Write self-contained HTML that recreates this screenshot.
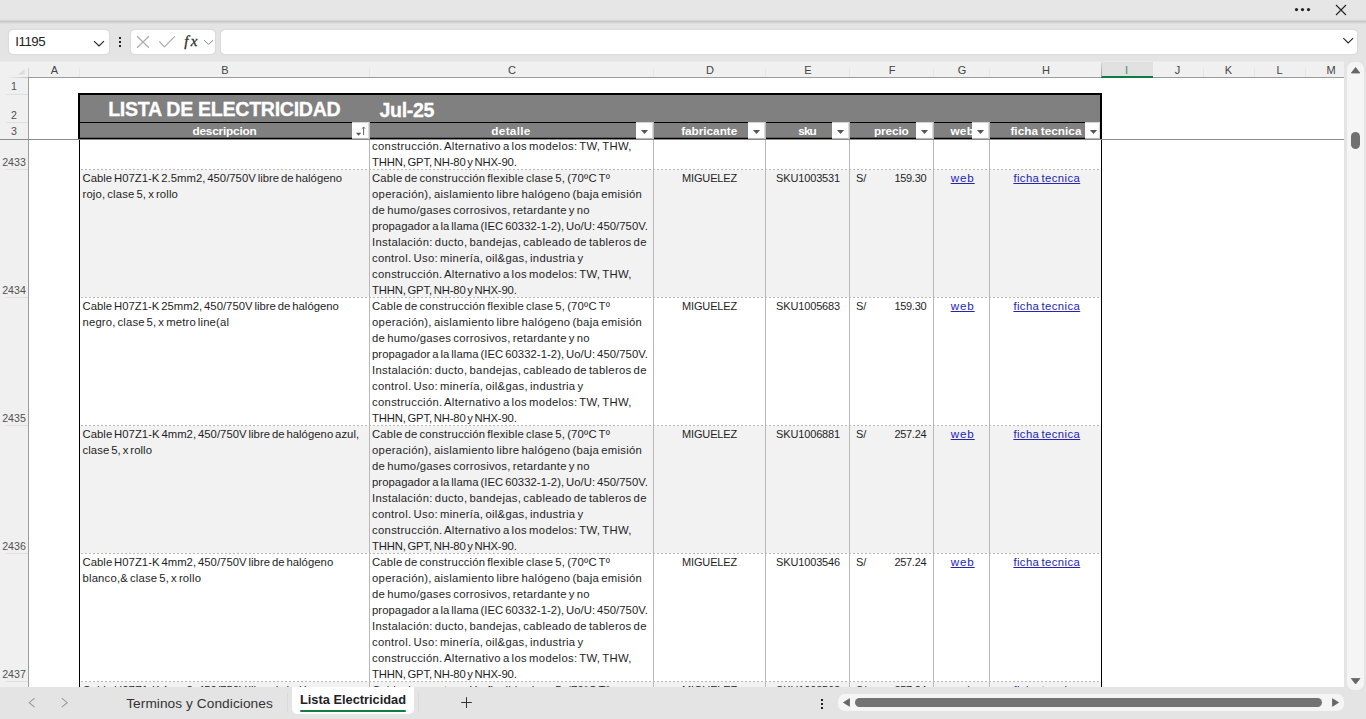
<!DOCTYPE html>
<html lang="es"><head><meta charset="utf-8"><title>Lista Electricidad</title>
<style>
html,body{margin:0;padding:0}
body{width:1366px;height:719px;overflow:hidden;background:#e4e4e4;position:relative;font-family:"Liberation Sans",sans-serif;color:#222}
.a{position:absolute}
.t{position:absolute;white-space:pre;line-height:16px;font-size:11px;color:#1e1e1e}
.b{font-size:11.3px}
.w{word-spacing:-1.3px}
.box{position:absolute;background:#fff;border-radius:4px;top:30px;height:24px;box-shadow:0 0 1.5px rgba(0,0,0,.22)}
.ch{position:absolute;top:62px;height:15px;line-height:16px;font-size:11px;color:#444;text-align:center}
.rh{position:absolute;left:0;width:28px;text-align:center;font-size:10.6px;line-height:14px;color:#505050}
.hd{position:absolute;top:123.6px;height:15px;line-height:15px;font-size:11.6px;font-weight:bold;color:#fff;text-align:center}
.fb{position:absolute;top:122px;width:16px;height:16px;background:#fdfdfd;border-top:1px solid #d4d4d4;border-right:1px solid #dcdcdc;border-bottom:1px solid #b4b4b4;box-sizing:border-box;width:17px;height:17px}
.fb i{position:absolute;left:5px;top:6px;width:0;height:0;border-left:3.5px solid transparent;border-right:3.5px solid transparent;border-top:4px solid #5a5a5a}
.lnk{color:#2424b8;text-decoration:underline}
</style></head><body>

<div class="a" style="left:0;top:0;width:1366px;height:20px;background:#e6e6e6"></div>
<div class="a" style="left:0;top:19px;width:1366px;height:1px;background:#e2e2e2"></div>
<div class="a" style="left:0;top:20px;width:1366px;height:1px;background:#d7d7d7"></div>
<div class="a" style="left:0;top:21px;width:1366px;height:1px;background:#c9c9c9"></div>
<div class="a" style="left:0;top:22px;width:1366px;height:1px;background:#d3d3d3"></div>
<div class="a" style="left:0;top:23px;width:1366px;height:1px;background:#dedede"></div>
<svg class="a" style="left:1290px;top:0" width="70" height="20" viewBox="0 0 70 20"><circle cx="6.5" cy="9.6" r="1.6" fill="#222"/><circle cx="12.5" cy="9.6" r="1.6" fill="#222"/><circle cx="18.5" cy="9.6" r="1.6" fill="#222"/><path d="M46 5 L56 15 M56 5 L46 15" stroke="#222" stroke-width="1.1" fill="none"/></svg>
<div class="box" style="left:9px;width:100px"></div>
<div class="t" style="left:15.3px;top:34px;font-size:13.3px;color:#222;letter-spacing:-0.474px">I1195</div>
<svg class="a" style="left:92px;top:38px" width="14" height="12" viewBox="0 0 14 12"><path d="M2 3.2 L7 8 L12 3.2" stroke="#222" stroke-width="1.1" fill="none"/></svg>
<svg class="a" style="left:117px;top:34px" width="6" height="16" viewBox="0 0 6 16"><rect x="2" y="3" width="2" height="2" fill="#222"/><rect x="2" y="7" width="2" height="2" fill="#222"/><rect x="2" y="11" width="2" height="2" fill="#222"/></svg>
<div class="box" style="left:131px;width:84px"></div>
<svg class="a" style="left:131px;top:30px" width="84" height="24" viewBox="0 0 84 24"><path d="M6 6.3 L18 17.7 M18 6.3 L6 17.7" stroke="#adadad" stroke-width="1.2" fill="none"/><path d="M28.3 11.5 L33.4 16.8 L43.8 6.3" stroke="#adadad" stroke-width="1.2" fill="none"/><path d="M73.2 10.2 L77.6 14.4 L82 10.2" stroke="#8a8a8a" stroke-width="1" fill="none"/></svg>
<div class="t" style="left:184.3px;top:32.2px;font-family:'Liberation Serif',serif;font-style:italic;font-size:15px;line-height:18px;color:#2b2b2b;letter-spacing:2.2px;-webkit-text-stroke:0.3px #2b2b2b">fx</div>
<div class="box" style="left:221px;width:1136px"></div>
<svg class="a" style="left:1341px;top:35px" width="14" height="12" viewBox="0 0 14 12"><path d="M2.3 3.2 L7.2 8 L12.1 3.2" stroke="#222" stroke-width="1.1" fill="none"/></svg>
<div class="a" style="left:0;top:62px;width:1344px;height:625px;background:#fff;overflow:hidden"></div>
<div class="a" style="left:0;top:62px;width:1344px;height:16px;background:#f0f0f0"></div>
<div class="a" style="left:0;top:61px;width:1344px;height:1px;background:#eaeaea"></div>
<div class="a" style="left:1101px;top:62px;width:52px;height:14px;background:#e1e1e1"></div>
<div class="a" style="left:1101px;top:76px;width:52px;height:2px;background:#107c41"></div>
<div class="a" style="left:1101px;top:63px;width:1px;height:14px;background:linear-gradient(#d4d4d4,#9a9a9a)"></div>
<div class="a" style="left:8px;top:77px;width:20px;height:1px;background:linear-gradient(90deg,#ececec,#c4c4c4)"></div>
<div class="a" style="left:28px;top:77px;width:1073px;height:1px;background:#9d9d9d"></div>
<div class="a" style="left:1153px;top:77px;width:191px;height:1px;background:#9d9d9d"></div>
<svg class="a" style="left:16px;top:67px" width="10" height="9" viewBox="0 0 10 9"><path d="M8.6 2 L8.6 7.6 L2 7.6 Z" fill="#dcdcdc"/></svg>
<div class="ch" style="left:29px;width:51px;">A</div>
<div class="a" style="left:79px;top:68px;width:1px;height:9px;background:#e6e6e6"></div>
<div class="ch" style="left:80px;width:290px;">B</div>
<div class="a" style="left:369px;top:68px;width:1px;height:9px;background:#e6e6e6"></div>
<div class="ch" style="left:370px;width:284px;">C</div>
<div class="a" style="left:653px;top:68px;width:1px;height:9px;background:#e6e6e6"></div>
<div class="ch" style="left:654px;width:112px;">D</div>
<div class="a" style="left:765px;top:68px;width:1px;height:9px;background:#e6e6e6"></div>
<div class="ch" style="left:766px;width:84px;">E</div>
<div class="a" style="left:849px;top:68px;width:1px;height:9px;background:#e6e6e6"></div>
<div class="ch" style="left:850px;width:84px;">F</div>
<div class="a" style="left:933px;top:68px;width:1px;height:9px;background:#e6e6e6"></div>
<div class="ch" style="left:934px;width:56px;">G</div>
<div class="a" style="left:989px;top:68px;width:1px;height:9px;background:#e6e6e6"></div>
<div class="ch" style="left:990px;width:112px;">H</div>
<div class="ch" style="left:1101px;width:51px;color:#3f8f63;">I</div>
<div class="ch" style="left:1152px;width:51px;">J</div>
<div class="a" style="left:1203px;top:68px;width:1px;height:9px;background:#e6e6e6"></div>
<div class="ch" style="left:1203px;width:51px;">K</div>
<div class="a" style="left:1254px;top:68px;width:1px;height:9px;background:#e6e6e6"></div>
<div class="ch" style="left:1254px;width:51px;">L</div>
<div class="a" style="left:1305px;top:68px;width:1px;height:9px;background:#e6e6e6"></div>
<div class="ch" style="left:1305px;width:52px;">M</div>
<div class="a" style="left:28px;top:68px;width:1px;height:9px;background:#cfcfcf"></div>
<div class="a" style="left:0;top:78px;width:28px;height:609px;background:#f0f0f0"></div>
<div class="a" style="left:28px;top:78px;width:1px;height:609px;background:#9d9d9d"></div>
<div class="rh" style="top:79px">1</div>
<div class="a" style="left:6px;top:94px;width:22px;height:1px;background:#e0e0e0"></div>
<div class="rh" style="top:108px">2</div>
<div class="a" style="left:6px;top:122px;width:22px;height:1px;background:#e0e0e0"></div>
<div class="rh" style="top:124px">3</div>
<div class="rh" style="top:155px">2433</div>
<div class="a" style="left:6px;top:169px;width:22px;height:1px;background:#e0e0e0"></div>
<div class="rh" style="top:283px">2434</div>
<div class="a" style="left:6px;top:297px;width:22px;height:1px;background:#e0e0e0"></div>
<div class="rh" style="top:411px">2435</div>
<div class="a" style="left:6px;top:425px;width:22px;height:1px;background:#e0e0e0"></div>
<div class="rh" style="top:539px">2436</div>
<div class="a" style="left:6px;top:553px;width:22px;height:1px;background:#e0e0e0"></div>
<div class="rh" style="top:667px">2437</div>
<div class="a" style="left:6px;top:681px;width:22px;height:1px;background:#e0e0e0"></div>
<div class="a" style="left:78px;top:93px;width:1024px;height:46px;background:#000"></div>
<div class="a" style="left:80px;top:137px;width:1020px;height:1px;background:#5c5c5c"></div>
<div class="a" style="left:80px;top:95px;width:1020px;height:27px;background:#808080"></div>
<div class="t" style="left:108.2px;top:96.5px;font-size:19.6px;line-height:24px;font-weight:bold;color:#fff;-webkit-text-stroke:0.3px #fff;letter-spacing:-0.295px">LISTA DE ELECTRICIDAD</div>
<div class="t" style="left:379.5px;top:97.5px;font-size:19.6px;line-height:24px;font-weight:bold;color:#fff;-webkit-text-stroke:0.3px #fff;letter-spacing:-0.328px">Jul-25</div>
<div class="a" style="left:80px;top:123px;width:289px;height:14px;background:#808080"></div>
<div class="hd" style="left:192.4px;width:auto;text-align:left;white-space:pre;font-size:11.8px;word-spacing:-0.6px;letter-spacing:-0.192px;height:14px">descripcion</div>
<div class="fb" style="left:352px"><svg class="a" style="left:0;top:0" width="16" height="16" viewBox="0 0 16 16"><path d="M4 9.8 L9.2 9.8 L6.6 12.8 Z" fill="#555"/><path d="M11.6 12 L11.6 4.2 M10.2 5.6 L11.6 4 L13 5.6" stroke="#555" stroke-width="0.9" fill="none"/></svg></div>
<div class="a" style="left:369px;top:123px;width:284px;height:14px;background:#808080"></div>
<div class="a" style="left:369px;top:122px;width:1px;height:17px;background:#b9b9b9"></div>
<div class="hd" style="left:491.3px;width:auto;text-align:left;white-space:pre;font-size:11.8px;word-spacing:-0.6px;letter-spacing:0.288px;height:14px">detalle</div>
<div class="fb" style="left:636px"><svg class="a" style="left:0;top:0" width="16" height="16" viewBox="0 0 16 16"><path d="M4.9 6.9 L12.1 6.9 L8.5 11 Z" fill="#555"/></svg></div>
<div class="a" style="left:653px;top:123px;width:112px;height:14px;background:#808080"></div>
<div class="a" style="left:653px;top:122px;width:1px;height:17px;background:#b9b9b9"></div>
<div class="hd" style="left:681.2px;width:auto;text-align:left;white-space:pre;font-size:11.8px;word-spacing:-0.6px;letter-spacing:-0.032px;height:14px">fabricante</div>
<div class="fb" style="left:748px"><svg class="a" style="left:0;top:0" width="16" height="16" viewBox="0 0 16 16"><path d="M4.9 6.9 L12.1 6.9 L8.5 11 Z" fill="#555"/></svg></div>
<div class="a" style="left:765px;top:123px;width:84px;height:14px;background:#808080"></div>
<div class="a" style="left:765px;top:122px;width:1px;height:17px;background:#b9b9b9"></div>
<div class="hd" style="left:798.3px;width:auto;text-align:left;white-space:pre;font-size:11.8px;word-spacing:-0.6px;letter-spacing:-0.964px;height:14px">sku</div>
<div class="fb" style="left:832px"><svg class="a" style="left:0;top:0" width="16" height="16" viewBox="0 0 16 16"><path d="M4.9 6.9 L12.1 6.9 L8.5 11 Z" fill="#555"/></svg></div>
<div class="a" style="left:849px;top:123px;width:84px;height:14px;background:#808080"></div>
<div class="a" style="left:849px;top:122px;width:1px;height:17px;background:#b9b9b9"></div>
<div class="hd" style="left:873.9px;width:auto;text-align:left;white-space:pre;font-size:11.8px;word-spacing:-0.6px;letter-spacing:-0.101px;height:14px">precio</div>
<div class="fb" style="left:916px"><svg class="a" style="left:0;top:0" width="16" height="16" viewBox="0 0 16 16"><path d="M4.9 6.9 L12.1 6.9 L8.5 11 Z" fill="#555"/></svg></div>
<div class="a" style="left:933px;top:123px;width:56px;height:14px;background:#808080"></div>
<div class="a" style="left:933px;top:122px;width:1px;height:17px;background:#b9b9b9"></div>
<div class="hd" style="left:950.4px;width:auto;text-align:left;white-space:pre;font-size:11.8px;word-spacing:-0.6px;letter-spacing:0.25px;height:14px">web</div>
<div class="fb" style="left:972px"><svg class="a" style="left:0;top:0" width="16" height="16" viewBox="0 0 16 16"><path d="M4.9 6.9 L12.1 6.9 L8.5 11 Z" fill="#555"/></svg></div>
<div class="a" style="left:989px;top:123px;width:111px;height:14px;background:#808080"></div>
<div class="a" style="left:989px;top:122px;width:1px;height:17px;background:#b9b9b9"></div>
<div class="hd" style="left:1010.4px;width:auto;text-align:left;white-space:pre;font-size:11.8px;word-spacing:-0.6px;letter-spacing:0.019px;height:14px">ficha tecnica</div>
<div class="fb" style="left:1085px;width:15px"><svg class="a" style="left:0;top:0" width="16" height="16" viewBox="0 0 16 16"><path d="M4.9 6.9 L12.1 6.9 L8.5 11 Z" fill="#555"/></svg></div>
<div class="a" style="left:0;top:139px;width:1344px;height:1px;background:#8c8c8c"></div>
<div class="a" style="left:80px;top:170px;width:1021px;height:127px;background:#f2f2f2"></div>
<div class="a" style="left:80px;top:426px;width:1021px;height:127px;background:#f2f2f2"></div>
<div class="a" style="left:80px;top:682px;width:1021px;height:5px;background:#f2f2f2"></div>
<div class="a" style="left:369px;top:140px;width:1px;height:547px;background:#b9b9b9"></div>
<div class="a" style="left:653px;top:140px;width:1px;height:547px;background:#b9b9b9"></div>
<div class="a" style="left:765px;top:140px;width:1px;height:547px;background:#b9b9b9"></div>
<div class="a" style="left:849px;top:140px;width:1px;height:547px;background:#b9b9b9"></div>
<div class="a" style="left:933px;top:140px;width:1px;height:547px;background:#b9b9b9"></div>
<div class="a" style="left:989px;top:140px;width:1px;height:547px;background:#b9b9b9"></div>
<div class="a" style="left:79px;top:140px;width:1px;height:547px;background:#000"></div>
<div class="a" style="left:1101px;top:140px;width:1px;height:547px;background:#000"></div>
<div class="a" style="left:80px;top:169px;width:1021px;height:1px;background:repeating-linear-gradient(90deg,transparent 0,transparent 1px,#b8b8b8 1px,#b8b8b8 3px,transparent 3px,transparent 4px)"></div>
<div class="a" style="left:80px;top:297px;width:1021px;height:1px;background:repeating-linear-gradient(90deg,transparent 0,transparent 1px,#b8b8b8 1px,#b8b8b8 3px,transparent 3px,transparent 4px)"></div>
<div class="a" style="left:80px;top:425px;width:1021px;height:1px;background:repeating-linear-gradient(90deg,transparent 0,transparent 1px,#b8b8b8 1px,#b8b8b8 3px,transparent 3px,transparent 4px)"></div>
<div class="a" style="left:80px;top:553px;width:1021px;height:1px;background:repeating-linear-gradient(90deg,transparent 0,transparent 1px,#b8b8b8 1px,#b8b8b8 3px,transparent 3px,transparent 4px)"></div>
<div class="a" style="left:80px;top:681px;width:1021px;height:1px;background:repeating-linear-gradient(90deg,transparent 0,transparent 1px,#b8b8b8 1px,#b8b8b8 3px,transparent 3px,transparent 4px)"></div>
<div class="a" style="left:0;top:140px;width:1344px;height:547px;overflow:hidden">
<div class="t b w" style="left:372px;top:-2px;letter-spacing:0.304px">construcción. Alternativo a los modelos: TW, THW,</div>
<div class="t b w" style="left:372px;top:14px;letter-spacing:-0.152px">THHN, GPT, NH-80 y NHX-90.</div>
<div class="t b w" style="left:82.5px;top:30px;letter-spacing:0.024px">Cable H07Z1-K 2.5mm2, 450/750V libre de halógeno</div>
<div class="t b w" style="left:82.5px;top:46px;letter-spacing:0.156px">rojo, clase 5, x rollo</div>
<div class="t b w" style="left:372px;top:30px;letter-spacing:0.192px">Cable de construcción flexible clase 5, (70ºC Tº</div>
<div class="t b w" style="left:372px;top:46px;letter-spacing:0.297px">operación), aislamiento libre halógeno (baja emisión</div>
<div class="t b w" style="left:372px;top:62px;letter-spacing:0.249px">de humo/gases corrosivos, retardante y no</div>
<div class="t b w" style="left:372px;top:78px;letter-spacing:0.055px">propagador a la llama (IEC 60332-1-2), Uo/U: 450/750V.</div>
<div class="t b w" style="left:372px;top:94px;letter-spacing:0.295px">Instalación: ducto, bandejas, cableado de tableros de</div>
<div class="t b w" style="left:372px;top:110px;letter-spacing:0.295px">control. Uso: minería, oil&amp;gas, industria y</div>
<div class="t b w" style="left:372px;top:126px;letter-spacing:0.304px">construcción. Alternativo a los modelos: TW, THW,</div>
<div class="t b w" style="left:372px;top:142px;letter-spacing:-0.152px">THHN, GPT, NH-80 y NHX-90.</div>
<div class="t" style="left:682px;top:30px;letter-spacing:-0.148px">MIGUELEZ</div>
<div class="t" style="left:776px;top:30px;letter-spacing:-0.139px">SKU1003531</div>
<div class="t" style="left:856px;top:30px">S/</div>
<div class="t" style="left:894.4px;top:30px;letter-spacing:-0.291px">159.30</div>
<div class="t lnk" style="left:950.7px;top:30px;font-size:11.6px;letter-spacing:0.909px">web</div>
<div class="t b w lnk" style="left:1013.4px;top:30px;letter-spacing:0.409px">ficha tecnica</div>
<div class="t b w" style="left:82.5px;top:158px;letter-spacing:0.023px">Cable H07Z1-K 25mm2, 450/750V libre de halógeno</div>
<div class="t b w" style="left:82.5px;top:174px;letter-spacing:0.157px">negro, clase 5, x metro line(al</div>
<div class="t b w" style="left:372px;top:158px;letter-spacing:0.192px">Cable de construcción flexible clase 5, (70ºC Tº</div>
<div class="t b w" style="left:372px;top:174px;letter-spacing:0.297px">operación), aislamiento libre halógeno (baja emisión</div>
<div class="t b w" style="left:372px;top:190px;letter-spacing:0.249px">de humo/gases corrosivos, retardante y no</div>
<div class="t b w" style="left:372px;top:206px;letter-spacing:0.055px">propagador a la llama (IEC 60332-1-2), Uo/U: 450/750V.</div>
<div class="t b w" style="left:372px;top:222px;letter-spacing:0.295px">Instalación: ducto, bandejas, cableado de tableros de</div>
<div class="t b w" style="left:372px;top:238px;letter-spacing:0.295px">control. Uso: minería, oil&amp;gas, industria y</div>
<div class="t b w" style="left:372px;top:254px;letter-spacing:0.304px">construcción. Alternativo a los modelos: TW, THW,</div>
<div class="t b w" style="left:372px;top:270px;letter-spacing:-0.152px">THHN, GPT, NH-80 y NHX-90.</div>
<div class="t" style="left:682px;top:158px;letter-spacing:-0.148px">MIGUELEZ</div>
<div class="t" style="left:776px;top:158px;letter-spacing:-0.139px">SKU1005683</div>
<div class="t" style="left:856px;top:158px">S/</div>
<div class="t" style="left:894.4px;top:158px;letter-spacing:-0.291px">159.30</div>
<div class="t lnk" style="left:950.7px;top:158px;font-size:11.6px;letter-spacing:0.909px">web</div>
<div class="t b w lnk" style="left:1013.4px;top:158px;letter-spacing:0.409px">ficha tecnica</div>
<div class="t b w" style="left:82.5px;top:286px;letter-spacing:0.036px">Cable H07Z1-K 4mm2, 450/750V libre de halógeno azul,</div>
<div class="t b w" style="left:82.5px;top:302px;letter-spacing:0.079px">clase 5, x rollo</div>
<div class="t b w" style="left:372px;top:286px;letter-spacing:0.192px">Cable de construcción flexible clase 5, (70ºC Tº</div>
<div class="t b w" style="left:372px;top:302px;letter-spacing:0.297px">operación), aislamiento libre halógeno (baja emisión</div>
<div class="t b w" style="left:372px;top:318px;letter-spacing:0.249px">de humo/gases corrosivos, retardante y no</div>
<div class="t b w" style="left:372px;top:334px;letter-spacing:0.055px">propagador a la llama (IEC 60332-1-2), Uo/U: 450/750V.</div>
<div class="t b w" style="left:372px;top:350px;letter-spacing:0.295px">Instalación: ducto, bandejas, cableado de tableros de</div>
<div class="t b w" style="left:372px;top:366px;letter-spacing:0.295px">control. Uso: minería, oil&amp;gas, industria y</div>
<div class="t b w" style="left:372px;top:382px;letter-spacing:0.304px">construcción. Alternativo a los modelos: TW, THW,</div>
<div class="t b w" style="left:372px;top:398px;letter-spacing:-0.152px">THHN, GPT, NH-80 y NHX-90.</div>
<div class="t" style="left:682px;top:286px;letter-spacing:-0.148px">MIGUELEZ</div>
<div class="t" style="left:776px;top:286px;letter-spacing:-0.139px">SKU1006881</div>
<div class="t" style="left:856px;top:286px">S/</div>
<div class="t" style="left:894.4px;top:286px;letter-spacing:-0.291px">257.24</div>
<div class="t lnk" style="left:950.7px;top:286px;font-size:11.6px;letter-spacing:0.909px">web</div>
<div class="t b w lnk" style="left:1013.4px;top:286px;letter-spacing:0.409px">ficha tecnica</div>
<div class="t b w" style="left:82.5px;top:414px;letter-spacing:0.036px">Cable H07Z1-K 4mm2, 450/750V libre de halógeno</div>
<div class="t b w" style="left:82.5px;top:430px;letter-spacing:0.183px">blanco,&amp; clase 5, x rollo</div>
<div class="t b w" style="left:372px;top:414px;letter-spacing:0.192px">Cable de construcción flexible clase 5, (70ºC Tº</div>
<div class="t b w" style="left:372px;top:430px;letter-spacing:0.297px">operación), aislamiento libre halógeno (baja emisión</div>
<div class="t b w" style="left:372px;top:446px;letter-spacing:0.249px">de humo/gases corrosivos, retardante y no</div>
<div class="t b w" style="left:372px;top:462px;letter-spacing:0.055px">propagador a la llama (IEC 60332-1-2), Uo/U: 450/750V.</div>
<div class="t b w" style="left:372px;top:478px;letter-spacing:0.295px">Instalación: ducto, bandejas, cableado de tableros de</div>
<div class="t b w" style="left:372px;top:494px;letter-spacing:0.295px">control. Uso: minería, oil&amp;gas, industria y</div>
<div class="t b w" style="left:372px;top:510px;letter-spacing:0.304px">construcción. Alternativo a los modelos: TW, THW,</div>
<div class="t b w" style="left:372px;top:526px;letter-spacing:-0.152px">THHN, GPT, NH-80 y NHX-90.</div>
<div class="t" style="left:682px;top:414px;letter-spacing:-0.148px">MIGUELEZ</div>
<div class="t" style="left:776px;top:414px;letter-spacing:-0.139px">SKU1003546</div>
<div class="t" style="left:856px;top:414px">S/</div>
<div class="t" style="left:894.4px;top:414px;letter-spacing:-0.291px">257.24</div>
<div class="t lnk" style="left:950.7px;top:414px;font-size:11.6px;letter-spacing:0.909px">web</div>
<div class="t b w lnk" style="left:1013.4px;top:414px;letter-spacing:0.409px">ficha tecnica</div>
<div class="t b w" style="left:82.5px;top:542px;letter-spacing:0.036px">Cable H07Z1-K 4mm2, 450/750V libre de halógeno</div>
<div class="t b w" style="left:372px;top:542px;letter-spacing:0.192px">Cable de construcción flexible clase 5, (70ºC Tº</div>
<div class="t b w" style="left:372px;top:558px;letter-spacing:0.297px">operación), aislamiento libre halógeno (baja emisión</div>
<div class="t b w" style="left:372px;top:574px;letter-spacing:0.249px">de humo/gases corrosivos, retardante y no</div>
<div class="t b w" style="left:372px;top:590px;letter-spacing:0.055px">propagador a la llama (IEC 60332-1-2), Uo/U: 450/750V.</div>
<div class="t b w" style="left:372px;top:606px;letter-spacing:0.295px">Instalación: ducto, bandejas, cableado de tableros de</div>
<div class="t b w" style="left:372px;top:622px;letter-spacing:0.295px">control. Uso: minería, oil&amp;gas, industria y</div>
<div class="t b w" style="left:372px;top:638px;letter-spacing:0.304px">construcción. Alternativo a los modelos: TW, THW,</div>
<div class="t b w" style="left:372px;top:654px;letter-spacing:-0.152px">THHN, GPT, NH-80 y NHX-90.</div>
<div class="t" style="left:682px;top:542px;letter-spacing:-0.148px">MIGUELEZ</div>
<div class="t" style="left:776px;top:542px;letter-spacing:-0.139px">SKU1003562</div>
<div class="t" style="left:856px;top:542px">S/</div>
<div class="t" style="left:894.4px;top:542px;letter-spacing:-0.291px">257.24</div>
<div class="t lnk" style="left:950.7px;top:542px;font-size:11.6px;letter-spacing:0.909px">web</div>
<div class="t b w lnk" style="left:1013.4px;top:542px;letter-spacing:0.409px">ficha tecnica</div>
</div>
<div class="a" style="left:1347px;top:62px;width:17px;height:628px;background:#f5f5f5;border-radius:7px"></div>
<svg class="a" style="left:1347px;top:62px" width="17" height="16" viewBox="0 0 17 16"><path d="M4.3 11 L8.6 5.5 L12.9 11 Z" fill="#666" stroke="#666" stroke-width="0.8" stroke-linejoin="round"/></svg>
<div class="a" style="left:1351px;top:132px;width:9px;height:17px;background:#707070;border-radius:4.5px"></div>
<svg class="a" style="left:1347px;top:672.6px" width="17" height="16" viewBox="0 0 17 16"><path d="M4.3 5.5 L8.6 11 L12.9 5.5 Z" fill="#666" stroke="#666" stroke-width="0.8" stroke-linejoin="round"/></svg>
<svg class="a" style="left:24px;top:694px" width="50" height="18" viewBox="0 0 50 18"><path d="M10.6 4.2 L5.2 8.7 L10.6 13.2" stroke="#9a9a9a" stroke-width="1.1" fill="none"/><path d="M37.8 4.2 L43.2 8.7 L37.8 13.2" stroke="#9a9a9a" stroke-width="1.1" fill="none"/></svg>
<div class="t" style="left:126.2px;top:694.7px;font-size:13.7px;line-height:18px;color:#333;letter-spacing:0.061px">Terminos y Condiciones</div>
<div class="a" style="left:287px;top:693px;width:1px;height:19px;background:#dadada"></div>
<div class="a" style="left:292px;top:687px;width:122px;height:27px;background:#fff;border-radius:0 0 5px 5px"></div>
<div class="t" style="left:300px;top:691px;font-size:12.8px;line-height:18px;font-weight:bold;color:#222">Lista Electricidad</div>
<div class="a" style="left:300px;top:710px;width:106px;height:2px;background:#107c41;border-radius:1px"></div>
<div class="a" style="left:418px;top:693px;width:1px;height:19px;background:#dadada"></div>
<svg class="a" style="left:460px;top:696px" width="14" height="14" viewBox="0 0 14 14"><path d="M6.5 1.2 L6.5 12 M1.2 6.5 L11.8 6.5" stroke="#333" stroke-width="1" fill="none"/></svg>
<svg class="a" style="left:819px;top:697px" width="6" height="14" viewBox="0 0 6 14"><rect x="2" y="2" width="2" height="2" fill="#222"/><rect x="2" y="6" width="2" height="2" fill="#222"/><rect x="2" y="10" width="2" height="2" fill="#222"/></svg>
<div class="a" style="left:838px;top:694px;width:506px;height:17px;background:#f5f5f5;border-radius:7px"></div>
<svg class="a" style="left:838px;top:694px" width="17" height="17" viewBox="0 0 17 17"><path d="M11.5 4.7 L5.5 8.5 L11.5 12.3 Z" fill="#666" stroke="#666" stroke-width="0.8" stroke-linejoin="round"/></svg>
<div class="a" style="left:855px;top:698px;width:467px;height:9px;background:#737373;border-radius:4.5px"></div>
<svg class="a" style="left:1327px;top:694px" width="17" height="17" viewBox="0 0 17 17"><path d="M5.5 4.7 L11.5 8.5 L5.5 12.3 Z" fill="#666" stroke="#666" stroke-width="0.8" stroke-linejoin="round"/></svg>
</body></html>
